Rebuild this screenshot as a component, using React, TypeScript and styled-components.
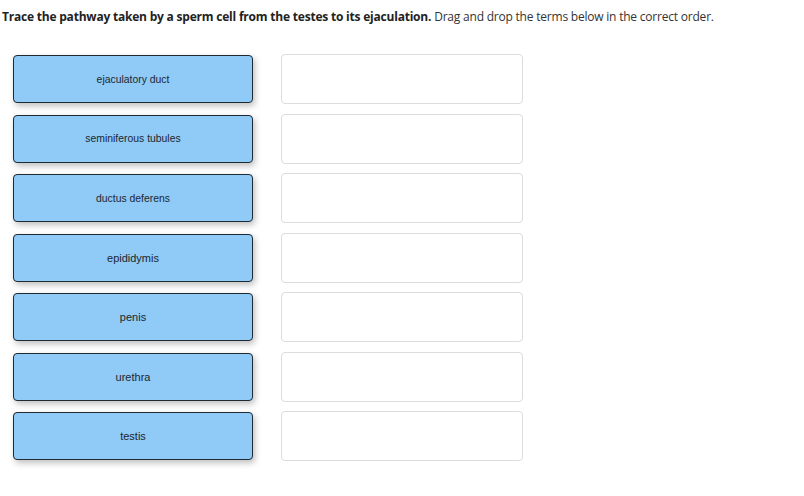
import React from "react";
import styled, { createGlobalStyle } from "styled-components";

const Global = createGlobalStyle`
  html, body { margin: 0; padding: 0; background: #ffffff; }
  body { font-family: "Open Sans", Lato, sans-serif; }
`;

const Page = styled.div`
  width: 804px;
  height: 496px;
  box-sizing: border-box;
  padding: 9px 0 0 2px;
`;

const Prompt = styled.p`
  margin: 0;
  font-family: "Open Sans", Lato, sans-serif;
  font-size: 12px;
  line-height: 16px;
  color: #333333;
  letter-spacing: -0.21px;
  white-space: nowrap;
`;

const Strong = styled.strong`
  font-weight: 700;
  color: #222222;
`;

const Board = styled.div`
  display: grid;
  grid-template-columns: 240px 242px;
  grid-auto-rows: 50px;
  column-gap: 28px;
  row-gap: 9.5px;
  margin: 29px 0 0 11px;
  align-items: center;
`;

const Term = styled.div<{ $size: number }>`
  height: 48px;
  box-sizing: border-box;
  border: 1px solid #1f2a33;
  border-radius: 4px;
  background: #8fcbf6;
  box-shadow: 2px 3px 6px rgba(0, 0, 0, 0.25);
  display: flex;
  align-items: center;
  justify-content: center;
  font-family: "Liberation Sans", Arial, sans-serif;
  font-size: ${(p) => p.$size}px;
  color: #1d2630;
`;

const Slot = styled.div`
  height: 50px;
  box-sizing: border-box;
  border: 1px solid #dcdcdc;
  border-radius: 4px;
  background: #ffffff;
`;

const terms: { label: string; size: number }[] = [
  { label: "ejaculatory duct", size: 10.4 },
  { label: "seminiferous tubules", size: 10.4 },
  { label: "ductus deferens", size: 10.4 },
  { label: "epididymis", size: 11 },
  { label: "penis", size: 11 },
  { label: "urethra", size: 11 },
  { label: "testis", size: 11 },
];

export default function App() {
  return (
    <>
      <Global />
      <Page>
        <Prompt>
          <Strong>Trace the pathway taken by a sperm cell from the testes to its ejaculation.</Strong>{" "}
          Drag and drop the terms below in the correct order.
        </Prompt>
        <Board>
          {terms.map((t) => (
            <React.Fragment key={t.label}>
              <Term $size={t.size}>{t.label}</Term>
              <Slot />
            </React.Fragment>
          ))}
        </Board>
      </Page>
    </>
  );
}
